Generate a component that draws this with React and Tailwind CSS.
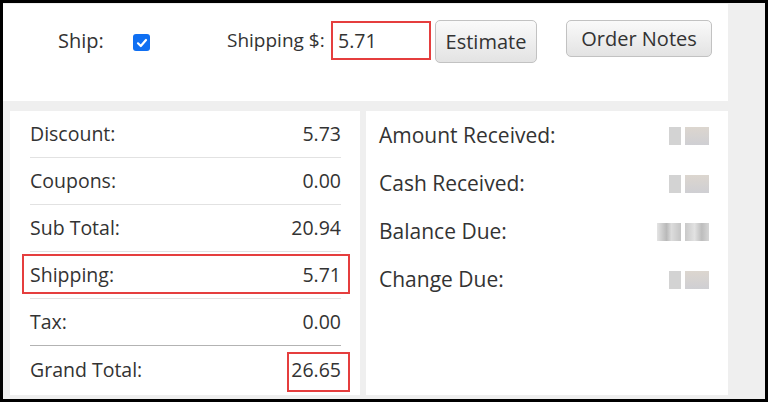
import React from "react";

const font = { fontFamily: '"Open Sans", "Liberation Sans", sans-serif' };

function Blur({ wide }) {
  return (
    <div className="flex items-stretch h-[18px] gap-[4px]">
      {wide ? (
        <>
          <div className="w-[24px] bg-[linear-gradient(90deg,#e4e4e4,#b9b9b9_40%,#dcdcdc_60%,#c4c4c4)]" />
          <div className="w-[24px] bg-[linear-gradient(90deg,#c9c9c9,#e2e2e2_40%,#bdbdbd_70%,#d6d6d6)]" />
        </>
      ) : (
        <>
          <div className="w-[12px] bg-[#d3d3d3]" />
          <div className="w-[24px] bg-[linear-gradient(180deg,#dcd6cf,#cfcfd3)]" />
        </>
      )}
    </div>
  );
}

function LRow({ label, value, last, strong, children }) {
  return (
    <div
      className={`relative flex items-center justify-between h-[47px] ${
        last ? "" : strong ? "border-b border-[#b3b3b3]" : "border-b border-[#e2e2e2]"
      }`}
    >
      <span>{label}</span>
      <span>{value}</span>
      {children}
    </div>
  );
}

export default function App() {
  return (
    <div className="w-[768px] h-[402px] bg-black p-[3px] overflow-hidden" style={font}>
      <div className="w-full h-full bg-[#efefef] flex flex-col text-[#333]">
        <div className="w-[725px] h-[97px] bg-white mt-[1px] flex items-start text-[20px]">
          <span className="mt-[22px] ml-[55px] w-[75px]">Ship:</span>
          <div className="mt-[30px] w-[17px] h-[17px] rounded-[3px] bg-[#0f6ff2] flex items-center justify-center">
            <svg width="12" height="12" viewBox="0 0 12 12">
              <path d="M2 6.3 L4.8 9 L10 3" stroke="white" strokeWidth="2.2" fill="none" strokeLinecap="round" strokeLinejoin="round" />
            </svg>
          </div>
          <span className="mt-[22px] ml-[77px] w-[104px] text-[19px] whitespace-nowrap">Shipping $:</span>
          <div className="mt-[17px] w-[100px] h-[39px] border-2 border-[#e53e3e] flex items-center pl-[5px] text-[19.5px]">
            5.71
          </div>
          <button className="mt-[16px] ml-[4px] w-[102px] h-[43px] rounded-[5px] border border-[#c2c2c2] bg-[linear-gradient(180deg,#fafafa,#e3e3e3)] text-[20px] text-[#333]">
            Estimate
          </button>
          <button className="mt-[16px] ml-[29px] w-[146px] h-[37px] rounded-[5px] border border-[#c2c2c2] bg-[linear-gradient(180deg,#fafafa,#e3e3e3)] text-[20px] text-[#333]">
            Order Notes
          </button>
        </div>
        <div className="flex mt-[10px] gap-[6px] ml-[7px]">
          <div className="w-[350px] h-[284px] bg-white pl-[20px] pr-[19px] text-[19.5px]">
            <LRow label="Discount:" value="5.73" />
            <LRow label="Coupons:" value="0.00" />
            <LRow label="Sub Total:" value="20.94" />
            <LRow label="Shipping:" value="5.71">
              <div className="absolute left-[-8px] right-[-9px] top-[2px] bottom-[4px] border-2 border-[#e53e3e]" />
            </LRow>
            <LRow label="Tax:" value="0.00" strong />
            <LRow label="Grand Total:" value="26.65" last>
              <div className="absolute right-[-9px] w-[63px] top-[6px] bottom-[1px] border-2 border-[#e53e3e]" />
            </LRow>
          </div>
          <div className="w-[362px] h-[284px] bg-white pl-[13px] pr-[19px] pt-[1px] text-[21px]">
            {[
              ["Amount Received:", false],
              ["Cash Received:", false],
              ["Balance Due:", true],
              ["Change Due:", false],
            ].map(([l, w]) => (
              <div key={l} className="flex items-center justify-between h-[48px]">
                <span>{l}</span>
                <Blur wide={w} />
              </div>
            ))}
          </div>
        </div>
      </div>
    </div>
  );
}
